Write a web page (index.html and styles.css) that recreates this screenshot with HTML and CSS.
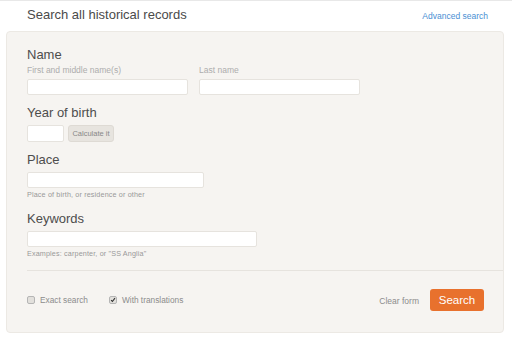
FILE: index.html
```html
<!DOCTYPE html>
<html lang="en">
<head>
	<meta charset="UTF-8">
	<title>Search all historical records</title>
	<link rel="stylesheet" href="styles.css">
</head>
<body>
	<div class="page">
		<div class="top">
			<h1>Search all historical records</h1>
			<a href="javascript:;" class="adv">Advanced search</a>
		</div>

		<form class="panel">
			<div class="fields">
				<div class="group">
					<h4>Name</h4>
					<div class="row">
						<div class="col">
							<label>First and middle name(s)</label>
							<input type="text" class="txt first">
						</div>
						<div class="col">
							<label>Last name</label>
							<input type="text" class="txt last">
						</div>
					</div>
				</div>

				<div class="group">
					<h4>Year of birth</h4>
					<div class="row small-gap">
						<input type="text" class="txt year">
						<input type="button" class="calc" value="Calculate it">
					</div>
				</div>

				<div class="group">
					<h4>Place</h4>
					<input type="text" class="txt place">
					<p class="hint">Place of birth, or residence or other</p>
				</div>

				<div class="group">
					<h4>Keywords</h4>
					<input type="text" class="txt keys">
					<p class="hint">Examples: carpenter, or "SS Anglia"</p>
				</div>
			</div>

			<div class="foot">
				<div class="opts">
					<span class="opt"><span class="box"></span>Exact search</span>
					<span class="opt"><span class="box on"><svg width="8" height="8" viewBox="0 0 8 8"><path d="M1.5 4.2 L3.2 6 L6.6 1.6" fill="none" stroke="#333" stroke-width="1.5"/></svg></span>With translations</span>
				</div>
				<div class="acts">
					<a href="javascript:;" class="clear">Clear form</a>
					<input type="button" class="go" value="Search">
				</div>
			</div>
		</form>
	</div>
</body>
</html>
```

FILE: styles.css
```css
*{
	margin: 0;
	padding: 0;
	box-sizing: border-box;
}
body{
	background: #fff;
	font-family: "Liberation Sans", Arial, sans-serif;
	color: #555;
}
a{
	text-decoration: none;
}
.page{
	width: 512px;
	height: 343px;
	border-top: 1px solid #e8e8e8;
}
/*顶部标题*/
.top{
	display: flex;
	justify-content: space-between;
	align-items: baseline;
	height: 30px;
	padding: 6px 24px 0 27px;
}
.top h1{
	font-size: 13px;
	font-weight: normal;
	line-height: 16px;
	color: #4a4a4a;
}
.adv{
	font-size: 8.5px;
	color: #4a8fd3;
}
/*表单面板*/
.panel{
	margin: 0 8px 0 6px;
	height: 302px;
	background: #f6f4f1;
	border: 1px solid #ece9e4;
	border-radius: 4px;
	display: flex;
	flex-direction: column;
}
.fields{
	padding: 15px 20px 0 20px;
}
.group{
	margin-bottom: 10px;
}
.group h4{
	font-size: 13px;
	font-weight: normal;
	line-height: 15px;
	color: #4d4d4d;
	margin-bottom: 5px;
}
.group:first-child h4{
	margin-bottom: 3px;
}
.row{
	display: flex;
	gap: 11px;
}
.row.small-gap{
	gap: 4px;
}
.col label{
	display: block;
	font-size: 8.5px;
	line-height: 10px;
	color: #adadad;
	margin-bottom: 4px;
}
.txt{
	display: block;
	height: 16px;
	background: #fff;
	border: 1px solid #e6e3de;
	border-radius: 2px;
	outline: none;
}
.first,.last{
	width: 161px;
}
.year{
	width: 37px;
	height: 17px;
}
.calc{
	width: 46px;
	height: 17px;
	border: 1px solid #dedad4;
	border-radius: 3px;
	background: #e7e4df;
	font-family: "Liberation Sans", Arial, sans-serif;
	font-size: 7.5px;
	color: #888;
	cursor: pointer;
}
.place{
	width: 177px;
}
.keys{
	width: 230px;
}
.hint{
	font-size: 7.2px;
	line-height: 9px;
	color: #999;
	margin-top: 2px;
	letter-spacing: 0.15px;
}
.group:nth-child(3){
	margin-bottom: 12px;
}
/*底部选项*/
.foot{
	margin: 2px 0 0 20px;
	border-top: 1px solid #e6e3de;
	display: flex;
	justify-content: space-between;
	align-items: center;
	padding: 18px 19px 0 0;
}
.opts{
	display: flex;
	gap: 21px;
	font-size: 8.3px;
	color: #8c8c8c;
}
.opt{
	display: flex;
	align-items: center;
	gap: 5px;
}
.box{
	width: 8px;
	height: 8px;
	border: 1px solid #b5b5b5;
	border-radius: 2px;
	background: #e2e0dc;
	display: flex;
	align-items: center;
	justify-content: center;
}
.box svg{
	display: block;
}
.acts{
	display: flex;
	align-items: center;
	gap: 11px;
}
.clear{
	font-size: 8.5px;
	color: #8c8c8c;
	padding-top: 2px;
}
.go{
	width: 54px;
	height: 22px;
	border: none;
	border-radius: 3px;
	background: #e8712d;
	color: #fff;
	font-family: "Liberation Sans", Arial, sans-serif;
	font-size: 11.5px;
	cursor: pointer;
}
```
